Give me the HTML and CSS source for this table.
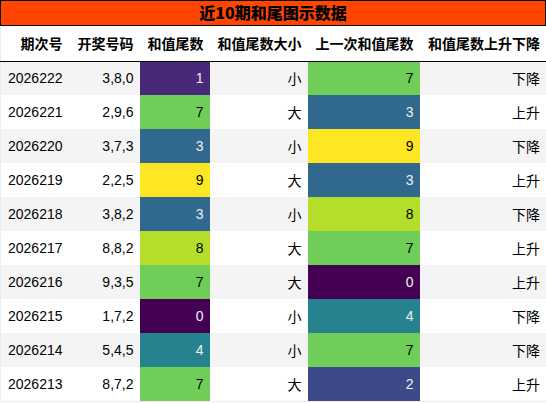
FILE: index.html
```html
<!DOCTYPE html>
<html lang="zh">
<head>
<meta charset="utf-8">
<link rel="stylesheet" href="styles.css">
</head>
<body>
<div class="wrap">
  <div class="title">近10期和尾图示数据</div>
  <table class="data">
    <colgroup>
      <col class="c1"><col class="c2"><col class="c3"><col class="c4"><col class="c5"><col class="c6">
    </colgroup>
    <thead>
      <tr><th>期次号</th><th>开奖号码</th><th>和值尾数</th><th>和值尾数大小</th><th>上一次和值尾数</th><th>和值尾数上升下降</th></tr>
    </thead>
    <tbody>
      <tr><td>2026222</td><td>3,8,0</td><td class="v1">1</td><td>小</td><td class="v7">7</td><td>下降</td></tr>
      <tr><td>2026221</td><td>2,9,6</td><td class="v7">7</td><td>大</td><td class="v3">3</td><td>上升</td></tr>
      <tr><td>2026220</td><td>3,7,3</td><td class="v3">3</td><td>小</td><td class="v9">9</td><td>下降</td></tr>
      <tr><td>2026219</td><td>2,2,5</td><td class="v9">9</td><td>大</td><td class="v3">3</td><td>上升</td></tr>
      <tr><td>2026218</td><td>3,8,2</td><td class="v3">3</td><td>小</td><td class="v8">8</td><td>下降</td></tr>
      <tr><td>2026217</td><td>8,8,2</td><td class="v8">8</td><td>大</td><td class="v7">7</td><td>上升</td></tr>
      <tr><td>2026216</td><td>9,3,5</td><td class="v7">7</td><td>大</td><td class="v0">0</td><td>上升</td></tr>
      <tr><td>2026215</td><td>1,7,2</td><td class="v0">0</td><td>小</td><td class="v4">4</td><td>下降</td></tr>
      <tr><td>2026214</td><td>5,4,5</td><td class="v4">4</td><td>小</td><td class="v7">7</td><td>下降</td></tr>
      <tr><td>2026213</td><td>8,7,2</td><td class="v7">7</td><td>大</td><td class="v2">2</td><td>上升</td></tr>
    </tbody>
  </table>
</div>
</body>
</html>
```
FILE: styles.css
```css
html, body {
  margin: 0;
  padding: 0;
  background: #ffffff;
}
body {
  font-family: "Liberation Sans", "Noto Sans CJK SC", sans-serif;
  font-size: 14px;
  color: #000;
}
.wrap {
  width: 546px;
}
.title {
  box-sizing: border-box;
  height: 26px;
  width: 546px;
  border: 1px solid #000;
  background: #ff4500;
  text-align: center;
  font-family: "Noto Sans CJK SC", sans-serif;
  font-weight: 900;
  font-size: 16px;
  line-height: 23px;
}
.data {
  border-collapse: collapse;
  table-layout: fixed;
  width: 546px;
  border-left: 1px solid #ececec;
  border-right: 1px solid #ececec;
  border-bottom: 1px solid #ececec;
}
.c1 { width: 68px; }
.c2 { width: 71px; }
.c3 { width: 70px; }
.c4 { width: 98px; }
.c5 { width: 112px; }
.c6 { width: 127px; }
.data th {
  height: 35px;
  padding: 0 6px;
  text-align: right;
  font-family: "Noto Sans CJK SC", sans-serif;
  font-weight: bold;
  font-size: 14px;
  white-space: nowrap;
  border-bottom: 1px solid #000;
  box-sizing: border-box;
}
.data td {
  height: 34px;
  padding: 0 6px;
  text-align: right;
  white-space: nowrap;
  box-sizing: border-box;
}
.data tbody tr:nth-child(odd) {
  background: #f4f4f4;
}
.v0 { background: #440154; color: #f1f1f1; }
.v1 { background: #482878; color: #f1f1f1; }
.v2 { background: #3e4989; color: #f1f1f1; }
.v3 { background: #31688e; color: #f1f1f1; }
.v4 { background: #26828e; color: #f1f1f1; }
.v7 { background: #6ece58; color: #000; }
.v8 { background: #b5de2b; color: #000; }
.v9 { background: #fde725; color: #000; }
```
